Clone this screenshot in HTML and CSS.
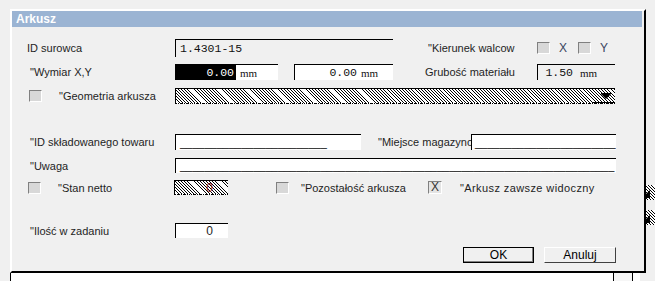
FILE: index.html
```html
<!DOCTYPE html>
<html lang="pl">
  <head>
    <meta charset="UTF-8" />
    <title>Arkusz</title>
    <link rel="stylesheet" href="styles.css">
  </head>
  <body>
    <!-- window behind the dialog -->
    <div class="backdrop">
      <div class="under-panel">
        <div class="under-tab"></div>
      </div>
      <div class="side-tools">
        <div class="tool">
          <svg width="10" height="14" viewBox="0 0 10 14"><path d="M1 13 L9 5 L9 13 Z" fill="#000"/></svg>
        </div>
        <div class="tool">
          <svg width="10" height="14" viewBox="0 0 10 14"><path d="M1 13 L9 5 L9 13 Z" fill="#000"/></svg>
        </div>
      </div>
    </div>

    <div class="dialog">
      <div class="dialog-title">Arkusz</div>
      <div class="dialog-body">

        <div class="row r1">
          <span class="lbl">ID surowca</span>
          <div class="field w-218"><span class="mono pad">1.4301-15</span></div>
          <span class="lbl-right q">"Kierunek walcow</span>
          <span class="check"></span><span class="axis">X</span>
          <span class="check"></span><span class="axis">Y</span>
        </div>

        <div class="row r2">
          <span class="lbl q">"Wymiar X,Y</span>
          <div class="field white w-103">
            <span class="value sel w-60 mono">0.00</span><span class="unit">mm</span>
          </div>
          <div class="field white w-99 gap-16">
            <span class="value w-62 mono">0.00</span><span class="unit">mm</span>
          </div>
          <span class="lbl-right">Grubość materiału</span>
          <div class="field w-78">
            <span class="value w-35 mono">1.50</span><span class="unit ml-7">mm</span>
          </div>
        </div>

        <div class="row r3">
          <span class="check ml-2"></span>
          <span class="lbl-check">"Geometria arkusza</span>
          <div class="field hatch w-440">
            <span class="dd">
              <svg width="10" height="6" viewBox="0 0 10 6"><rect width="10" height="1" fill="#000"/><path d="M0 1 H10 L5 6 Z" fill="#000"/></svg>
            </span>
          </div>
        </div>

        <div class="row r4">
          <span class="lbl q">"ID składowanego towaru</span>
          <div class="field white w-186"><span class="blank">________________________</span></div>
          <span class="lbl-mid q">"Miejsce magazyno</span>
          <div class="field white w-145"><span class="blank pad-3">_______________________</span></div>
        </div>

        <div class="row r5">
          <span class="lbl q">"Uwaga</span>
          <div class="field white w-441"><span class="blank">_______________________________________________________________________</span></div>
        </div>

        <div class="row r6">
          <span class="check ml-1"></span>
          <span class="lbl-check">"Stan netto</span>
          <div class="field hatch w-54"><span class="value num red">0</span></div>
          <span class="check ml-48"></span>
          <span class="lbl-opt">"Pozostałość arkusza</span>
          <span class="check checked">X</span>
          <span class="lbl-last">"Arkusz zawsze widoczny</span>
        </div>

        <div class="row r7">
          <span class="lbl q">"Ilość w zadaniu</span>
          <div class="field white w-53"><span class="value num">0</span></div>
        </div>

        <div class="row buttons">
          <button class="btn btn-ok">OK</button>
          <button class="btn btn-cancel">Anuluj</button>
        </div>

      </div>
    </div>
  </body>
</html>
```

FILE: styles.css
```css
* {
  box-sizing: border-box;
}
body {
  margin: 0;
  width: 655px;
  height: 281px;
  overflow: hidden;
  background: #f0f0f0;
  font-family: "Liberation Sans", Arial, sans-serif;
  font-size: 11px;
  color: #1e1e1e;
}

/* window behind */
.backdrop {
  display: flex;
  padding-top: 185px;
}
.under-panel {
  margin-left: 10px;
  width: 636px;
  height: 96px;
  background: #fff;
  border-left: 1px solid #000;
  display: flex;
  align-items: flex-end;
}
.under-tab {
  margin-left: 602px;
  width: 20px;
  height: 9px;
  border-left: 1px solid #000;
  border-right: 1px solid #000;
  background: #f6f6f6;
}
.side-tools {
  display: flex;
  flex-direction: column;
  gap: 10px;
}
.tool {
  width: 15px;
  height: 15px;
  border-left: 1px solid #000;
  background: repeating-linear-gradient(45deg, #000 0 0.7px, #fff 0.7px 2.2px);
}
.tool svg {
  display: block;
}

/* dialog */
.dialog {
  position: absolute;
  left: 10px;
  top: 9px;
  width: 636px;
  height: 264px;
  background: #f0f0f0;
  border: 2px solid;
  border-color: #fff #000 #000 #fff;
}
.dialog-title {
  height: 16px;
  margin-right: 2px;
  padding-left: 4px;
  background: #9bb4d3;
  color: #fff;
  font-size: 12px;
  font-weight: bold;
  line-height: 16px;
}
.dialog-body {
  padding: 12px 0 0 15px;
}
.row {
  display: flex;
  align-items: center;
}
.r1 { height: 18px; }
.r2 { height: 16px; margin-top: 7px; }
.r3 { height: 16px; margin-top: 8px; }
.r4 { height: 16px; margin-top: 30px; }
.r5 { height: 15px; margin-top: 8px; }
.r6 { height: 15px; margin-top: 7px; }
.r7 { height: 15px; margin-top: 28px; }
.buttons { height: 16px; margin-top: 9px; padding-left: 436px; gap: 10px; }

/* labels */
.lbl {
  width: 148px;
  flex-shrink: 0;
  white-space: nowrap;
}
.q {
  padding-left: 3px;
}
.lbl-right {
  width: 112px;
  margin-left: 32px;
  flex-shrink: 0;
  white-space: nowrap;
}
.lbl-mid {
  width: 96px;
  margin-left: 14px;
  flex-shrink: 0;
  white-space: nowrap;
}
.lbl-check {
  width: 133px;
  padding-left: 17px;
  flex-shrink: 0;
  white-space: nowrap;
}
.lbl-opt {
  width: 139px;
  padding-left: 12px;
  flex-shrink: 0;
  white-space: nowrap;
}
.lbl-last {
  padding-left: 18px;
  letter-spacing: 0.4px;
  white-space: nowrap;
}
.axis {
  width: 19px;
  margin-left: 9px;
  color: #3a4560;
  font-size: 12px;
}

/* checkboxes */
.check {
  width: 13px;
  height: 12px;
  flex-shrink: 0;
  background: #d8d8d8;
  border-top: 1px solid #808080;
  border-left: 1px solid #808080;
  border-right: 1px solid #fff;
  border-bottom: 1px solid #fff;
}
.check.checked {
  width: 14px;
  height: 13px;
  background: #e4e4e4;
  font-size: 12px;
  line-height: 11px;
  text-align: center;
  color: #333;
}
.ml-1 { margin-left: 1px; }
.ml-2 { margin-left: 2px; }
.ml-48 { margin-left: 48px; }

/* fields */
.field {
  height: 100%;
  flex-shrink: 0;
  display: flex;
  align-items: center;
  overflow: hidden;
  border-top: 1px solid #000;
  border-left: 1px solid #000;
}
.field.white {
  background: #fff;
}
.field.hatch {
  background: repeating-linear-gradient(45deg, #000 0 0.7px, #fff 0.7px 2.2px);
  border-bottom: 1px dotted #000;
  justify-content: flex-end;
}
.w-218 { width: 218px; }
.w-103 { width: 103px; }
.w-99 { width: 99px; }
.w-78 { width: 78px; }
.w-440 { width: 440px; }
.w-186 { width: 186px; }
.w-145 { width: 145px; }
.w-441 { width: 441px; }
.w-54 { width: 54px; }
.w-53 { width: 53px; }
.gap-16 { margin-left: 16px; }

.mono {
  font-family: "Liberation Mono", "Courier New", monospace;
  font-size: 11.5px;
  color: #111;
}
.pad {
  padding-left: 4px;
}
.value {
  height: 100%;
  line-height: 15px;
  text-align: right;
  flex-shrink: 0;
}
.sel {
  background: #000;
  color: #fff;
  padding-right: 2px;
}
.w-60 { width: 60px; }
.w-62 { width: 62px; }
.w-35 { width: 35px; }
.unit {
  margin-left: 4px;
  font-family: "Liberation Serif", "Times New Roman", serif;
  font-size: 11px;
  color: #111;
}
.ml-7 { margin-left: 7px; }
.num {
  width: 100%;
  padding-right: 15px;
  line-height: 14px;
  font-size: 12px;
}
.red {
  color: #8a1c1c;
}
.blank {
  padding-left: 4px;
  white-space: nowrap;
  line-height: 14px;
  color: #000;
}
.pad-3 {
  padding-left: 3px;
}
.dd {
  width: 22px;
  height: 100%;
  border-bottom: 1px solid #000;
  display: flex;
  align-items: center;
  justify-content: center;
  padding-left: 4px;
}
.dd svg {
  display: block;
}

/* buttons */
.btn {
  height: 16px;
  padding: 0;
  background: #f0f0f0;
  font-family: "Liberation Sans", Arial, sans-serif;
  font-size: 12px;
  line-height: 13px;
  color: #000;
  cursor: pointer;
}
.btn-ok {
  width: 71px;
  border: 1px solid #000;
  box-shadow: inset -1px -1px #808080;
}
.btn-cancel {
  width: 72px;
  border: 1px solid;
  border-color: #fff #404040 #404040 #fff;
}
```
